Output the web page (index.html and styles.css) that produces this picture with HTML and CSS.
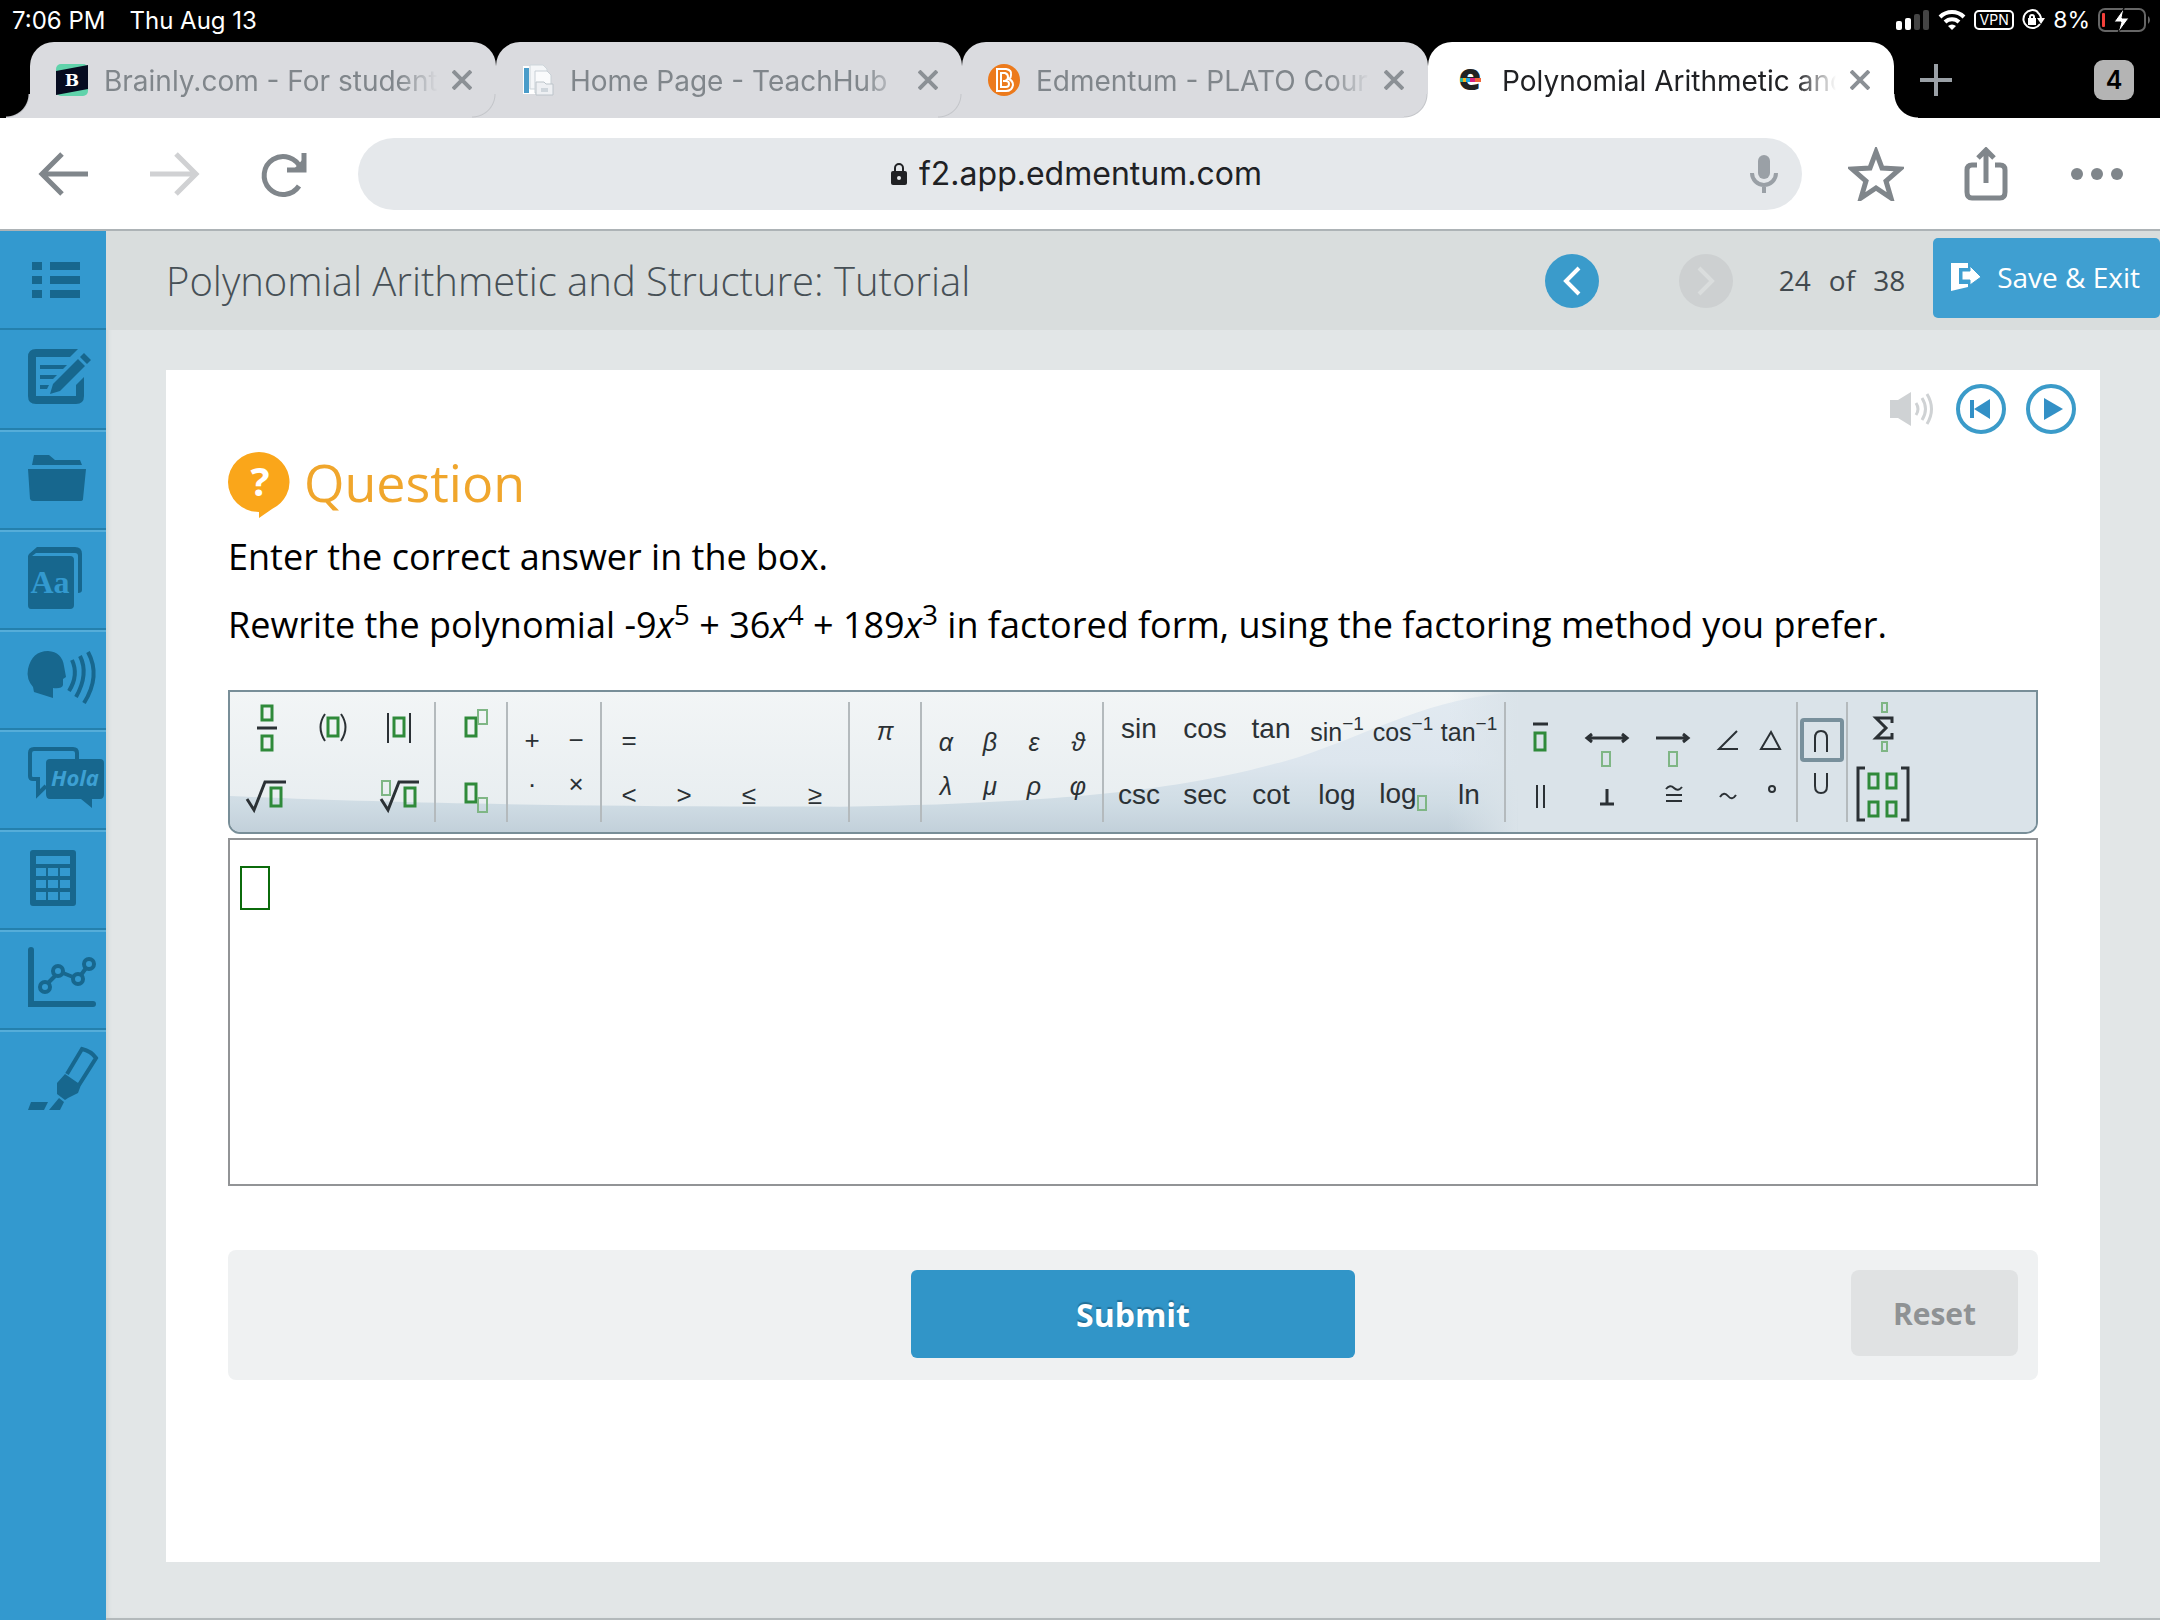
FILE: index.html
```html
<!DOCTYPE html>
<html lang="en">
<head>
  <meta charset="UTF-8">
  <meta name="viewport" content="width=device-width, initial-scale=1.0">
  <title>Polynomial Arithmetic and Structure: Tutorial</title>
  <link rel="stylesheet" href="styles.css">
</head>
<body>

  <!-- device status bar -->
  <div class="status-bar">
    <span>7:06 PM</span>
    <span>Thu Aug 13</span>
    <div class="status-right">
      <svg width="34" height="22" viewBox="0 0 34 22"><rect x="0" y="12" width="6" height="9" rx="2" fill="#fff"/><rect x="9" y="9" width="6" height="12" rx="2" fill="#fff"/><rect x="18" y="5" width="6" height="16" rx="2" fill="#444"/><rect x="27" y="1" width="6" height="20" rx="2" fill="#444"/></svg>
      <svg width="28" height="20" viewBox="0 0 28 20" fill="none" stroke="#fff" stroke-width="4"><path d="M2 7a17 17 0 0 1 24 0M7 12a10 10 0 0 1 14 0"/><path d="M14 20l-4-4a6 6 0 0 1 8 0z" fill="#fff" stroke="none"/></svg>
      <span class="vpn">VPN</span>
      <svg width="23" height="22" viewBox="0 0 23 22" fill="none" stroke="#fff" stroke-width="2"><path d="M16 3a9 9 0 1 0 2 12M15 3a9 9 0 0 1 4 7"/><path d="M15 9h8l-4 6z" fill="#fff" stroke="none"/><rect x="6" y="9" width="8" height="7" fill="#fff" stroke="none"/><path d="M8 10V8a2 2 0 0 1 4 0v2"/></svg>
      <span class="percent">8%</span>
      <svg width="54" height="26" viewBox="0 0 54 26"><rect x="1" y="2" width="46" height="22" rx="6" fill="none" stroke="#666" stroke-width="2"/><path d="M50 9a5 5 0 0 1 0 8z" fill="#666"/><rect x="4" y="6" width="3" height="14" rx="1" fill="#f3403a"/><path d="M26 1L16 15h7l-3 11 11-15h-7z" fill="#fff" stroke="#000" stroke-width="1"/></svg>
    </div>
  </div>

  <!-- browser tabs -->
  <div class="tab-bar">
    <div class="tab">
      <svg class="favicon" viewBox="0 0 32 32"><rect width="32" height="32" rx="5" fill="#60d3ab"/><path d="M0 7L32 1V25L0 31z" fill="#060b20"/><text x="16" y="22" text-anchor="middle" font-family="DejaVu Serif" font-weight="bold" font-size="17" fill="#fff">B</text></svg>
      <span class="tab-title">Brainly.com - For students</span>
      <button class="tab-close" aria-label="Close tab"><svg width="20" height="20" viewBox="0 0 20 20"><path d="M1 1l18 18M19 1L1 19"/></svg></button>
    </div>
    <div class="tab">
      <svg class="favicon" viewBox="0 0 32 32"><rect x="1" y="2" width="18" height="28" fill="#fff"/><rect x="2" y="4" width="5" height="25" fill="#4a9cc9"/><path d="M8 1h13l4 4v20H8z" fill="#f4f6f8" stroke="#cdd5da"/><path d="M13 7h12l4 4v18H13z" fill="#fafbfc" stroke="#c8d0d6"/><path d="M14 18h8l2 2h7v11H14z" fill="#eef0f3" stroke="#bcc4ca"/><rect x="19" y="24" width="7" height="4" fill="#cfd6dc"/></svg>
      <span class="tab-title">Home Page - TeachHub</span>
      <button class="tab-close" aria-label="Close tab"><svg width="20" height="20" viewBox="0 0 20 20"><path d="M1 1l18 18M19 1L1 19"/></svg></button>
    </div>
    <div class="tab">
      <svg class="favicon" viewBox="0 0 32 32"><circle cx="16" cy="16" r="16" fill="#ec7a1c"/><path d="M9 5h9q6 1 5 6q0 3-2 4q4 2 4 6q-1 6-7 6H9zM13 9v14h5q3 0 3-3t-3-3h-3h2q3-1 3-4t-3-4z" fill="none" stroke="#fff" stroke-width="2"/></svg>
      <span class="tab-title">Edmentum - PLATO Courseware</span>
      <button class="tab-close" aria-label="Close tab"><svg width="20" height="20" viewBox="0 0 20 20"><path d="M1 1l18 18M19 1L1 19"/></svg></button>
    </div>
    <div class="tab active">
      <svg class="favicon" viewBox="0 0 32 32"><text x="16" y="26" text-anchor="middle" font-family="Open Sans" font-weight="800" font-size="37" fill="#222">e</text><rect x="6" y="14" width="3" height="4" fill="#2db5a0"/><rect x="9" y="14" width="3" height="4" fill="#f7b51c"/><rect x="12" y="14" width="4" height="4" fill="#21a6dd"/><rect x="16" y="14" width="5" height="4" fill="#d6227f"/><rect x="21" y="14" width="6" height="4" fill="#f0663a"/></svg>
      <span class="tab-title">Polynomial Arithmetic and Structure</span>
      <button class="tab-close" aria-label="Close tab"><svg width="20" height="20" viewBox="0 0 20 20"><path d="M1 1l18 18M19 1L1 19"/></svg></button>
    </div>
    <button class="new-tab" aria-label="New tab"><svg width="32" height="32" viewBox="0 0 32 32"><path d="M16 0v32M0 16h32" stroke="#9aa0a6" stroke-width="4"/></svg></button>
    <button class="tab-count">4</button>
  </div>

  <!-- address row -->
  <div class="nav-bar">
    <button class="nav-btn" aria-label="Back"><svg width="52" height="48" viewBox="0 0 52 48" stroke="#80868b"><path d="M24 4L4 24l20 20M4 24h46"/></svg></button>
    <button class="nav-btn forward" aria-label="Forward"><svg width="52" height="48" viewBox="0 0 52 48" stroke="#d0d1d3"><path d="M28 4l20 20-20 20M48 24H2"/></svg></button>
    <button class="nav-btn reload" aria-label="Reload"><svg width="48" height="48" viewBox="0 0 48 48" stroke="#80868b"><path d="M39 36A19 19 0 1 1 41 19"/><path d="M44 3v17H27" stroke-width="5"/><path d="M44 20L33 20 44 8z" fill="#80868b" stroke="none"/></svg></button>
    <div class="omnibox">
      <svg width="16" height="22" viewBox="0 0 16 22"><rect y="8" width="16" height="14" rx="2" fill="#202124"/><path d="M4 9V5a4 4 0 0 1 8 0v4" fill="none" stroke="#202124" stroke-width="2"/><circle cx="8" cy="15" r="2" fill="#e5e8eb"/></svg>
      <input class="url" type="text" aria-label="Address" value="f2.app.edmentum.com">
      <button class="mic" aria-label="Voice search"><svg width="28" height="40" viewBox="0 0 28 40"><rect x="8" y="1" width="12" height="24" rx="6" fill="#9aa0a6"/><path d="M2 19a12 12 0 0 0 24 0M14 31v8" fill="none" stroke="#9aa0a6" stroke-width="4"/></svg></button>
    </div>
    <button class="nav-btn star" aria-label="Bookmark"><svg width="56" height="54" viewBox="0 0 56 54" stroke="#80868b"><path d="M28 5l6 16 18 1-14 12 5 17-15-10-15 10 5-17L4 22l18-1z"/></svg></button>
    <button class="nav-btn share" aria-label="Share"><svg width="44" height="54" viewBox="0 0 44 54" stroke="#80868b"><path d="M13 18H8q-5 0-5 5v22q0 6 5 6h28q5 0 5-6V23q0-5-5-5h-5M22 36V4M14 11l8-8 8 8"/></svg></button>
    <button class="nav-btn more" aria-label="More"><svg width="54" height="14" viewBox="0 0 54 14" fill="#80868b"><circle cx="7" cy="7" r="6"/><circle cx="27" cy="7" r="6"/><circle cx="47" cy="7" r="6"/></svg></button>
  </div>

  <div class="app">
    <nav class="sidebar">
      <button aria-label="Contents"><svg viewBox="0 0 106 100"><path d="M32 31h10v8H32zM50 31h30v8H50zM32 45h10v8H32zM50 45h30v8H50zM32 59h10v8H32zM50 59h30v8H50z"/></svg></button>
      <button aria-label="Notes"><svg viewBox="0 0 106 100"><path d="M78 19H36q-8 0-8 8v39q0 8 8 8h40q8 0 8-8V47l-8 8v11H36V27h34z"/><path d="M40 35h27l-4 4H40zM40 45h17l-4 4H40zM40 55h9l-2 4h-7z"/><path d="M50 64l3-10 25-25 7 7-25 25zM80 27l4-4 7 7-4 4z"/></svg></button>
      <button aria-label="Portfolio"><svg viewBox="0 0 106 100"><path d="M34 25h15l6 5h25l2 5H32zM28 39h58l-3 30q0 2-3 2H33q-2 0-3-2z"/></svg></button>
      <button aria-label="Dictionary"><svg viewBox="0 0 106 100"><path d="M29 24l8-7h38q7 0 7 7v36q0 3-4 3V26q0-3-3-3H36l-4 3h38q4 0 4 4v45q0 4-4 4H31q-3 0-3-4V26z"/><text class="book-text" x="50" y="63" text-anchor="middle">Aa</text></svg></button>
      <button aria-label="Read aloud"><svg viewBox="0 0 106 100"><path d="M33 57q-7-8-5-18 4-18 20-18 14 1 16 15l2 11-3 2v6q-1 4-10 3v10l-19-6z"/><path d="M72 30q7 15-3 31M80 26q9 18-4 41M88 22q13 24-4 51" fill="none" stroke="#17678e" stroke-width="4"/></svg></button>
      <button aria-label="Translate"><svg viewBox="0 0 106 100"><path d="M46 56l-8 8V49h-5q-3 0-3-3V23q0-4 4-4h39q4 0 4 4v8" fill="none" stroke="#17678e" stroke-width="4"/><path d="M50 29h50q4 0 4 4v31q0 5-4 5h-8v9l-11-9H50q-4 0-4-5V33q0-4 4-4z"/><text class="hola-text" x="75" y="56" text-anchor="middle">Hola</text></svg></button>
      <button aria-label="Calculator"><svg viewBox="0 0 106 100"><path fill-rule="evenodd" d="M33 20h40q3 0 3 3v50q0 3-3 3H33q-3 0-3-3V23q0-3 3-3zM36 26v8h34v-8zM36 38v8h10v-8zM48 38v8h10v-8zM60 38v8h10v-8zM36 50v8h10v-8zM48 50v8h10v-8zM60 50v8h10v-8zM36 62v8h10v-8zM48 62v8h10v-8zM60 62v8h10v-8z"/></svg></button>
      <button aria-label="Graph"><svg viewBox="0 0 106 100"><g fill="none" stroke="#17678e" stroke-width="4"><path d="M31 20v54h62" stroke-width="6" stroke-linecap="round"/><circle cx="45" cy="57" r="5"/><circle cx="58" cy="41" r="5"/><circle cx="78" cy="49" r="5"/><circle cx="89" cy="34" r="5"/><path d="M49 52l6-6M63 43l10 4M81 45l5-7"/></g></svg></button>
      <button aria-label="Highlighter"><svg viewBox="0 0 106 100"><path d="M67 44l15-25q9 2 14 9L79 55" fill="none" stroke="#17678e" stroke-width="4"/><path d="M65 44l16 11-3 8-10 5-3 2-8-6v-11zM59 68l5 4-4 8H49zM31 72h17l-4 8H28z"/></svg></button>
    </nav>

    <div class="content">
      <header class="lesson-header">
        <h1>Polynomial Arithmetic and Structure: Tutorial</h1>
        <button class="page-btn" aria-label="Previous page"><svg width="20" height="32" viewBox="0 0 20 32"><path d="M17 3L4 16l13 13"/></svg></button>
        <button class="page-btn next" aria-label="Next page" disabled><svg width="20" height="32" viewBox="0 0 20 32"><path d="M3 3l13 13L3 29"/></svg></button>
        <span class="page-count"><span>24</span><span>of</span><span>38</span></span>
        <button class="save-btn"><svg width="30" height="30" viewBox="0 0 30 30"><path d="M0 1h17v5h-9v16h9v3L0 29z" fill="#fff"/><path d="M11 9h8V4l11 11-11 8v-5h-8z" fill="#fff" stroke="#3f9fd1" stroke-width="1"/></svg>Save &amp; Exit</button>
      </header>

      <main class="paper">
        <div class="audio">
          <svg width="44" height="36" viewBox="0 0 44 36"><path d="M0 9h8L21 1v34L8 27H0z" fill="#cfd2d4"/><path d="M26 12q4 6 0 12M32 7q7 11 0 22M37 3q9 15 0 30" fill="none" stroke="#cfd2d4" stroke-width="3"/></svg>
          <button class="audio-btn restart" aria-label="Restart audio"><svg width="50" height="50" viewBox="0 0 50 50"><circle cx="25" cy="25" r="23" fill="none" stroke="#3b9bc9" stroke-width="4"/><path d="M14 16h4v18h-4zM34 15v20L18 25z" fill="#3390c6"/></svg></button>
          <button class="audio-btn" aria-label="Play audio"><svg width="50" height="50" viewBox="0 0 50 50"><circle cx="25" cy="25" r="23" fill="none" stroke="#3b9bc9" stroke-width="4"/><path d="M18 14v22l19-11z" fill="#3390c6"/></svg></button>
        </div>

        <div class="question">
          <h2>
            <svg width="62" height="66" viewBox="0 0 62 66"><path d="M31 0a31 30 0 0 1 13 57L31 66V60A31 30 0 0 1 31 0z" fill="#faa61a"/><text x="32" y="44" text-anchor="middle">?</text></svg>
            Question
          </h2>
          <p>Enter the correct answer in the box.</p>
          <p>Rewrite the polynomial -9<i>x</i><sup>5</sup> + 36<i>x</i><sup>4</sup> + 189<i>x</i><sup>3</sup> in factored form, using the factoring method you prefer.</p>

          <div class="math-bar">
            <svg class="math-bg" viewBox="0 0 1809 144" preserveAspectRatio="none">
              <defs>
                <linearGradient id="hill" x1="0" y1="0" x2="0" y2="1"><stop offset="0" stop-color="#e2eaf1"/><stop offset="0.5" stop-color="#dde6ee"/><stop offset="0.8" stop-color="#cfdce4"/><stop offset="1" stop-color="#c2d0da"/></linearGradient>
                <linearGradient id="side" x1="0" y1="0" x2="1" y2="0"><stop offset="0" stop-color="#dae3e9" stop-opacity="0"/><stop offset="1" stop-color="#dae3e9"/></linearGradient>
              </defs>
              <path d="M0 107C150 114 350 118 611 118C900 114 1000 88 1070 67C1150 40 1200 6 1290 0H1809V144H0z" fill="url(#hill)"/>
              <rect x="1220" y="0" width="70" height="144" fill="url(#side)"/>
              <rect x="1290" y="0" width="519" height="144" fill="#dae3e9"/>
            </svg>

            <div class="group cols-3 rows-tall">
              <button aria-label="Fraction"><svg viewBox="0 0 66 66"><path class="slot" d="M28 10h10v14H28zM28 40h10v14H28z"/><path class="ink bold" d="M23 32h20"/></svg></button>
              <button aria-label="Parentheses"><svg viewBox="0 0 66 66"><path class="slot" d="M28 22h10v18H28z"/><path class="ink" d="M25 18q-9 13 0 27M41 18q9 13 0 27"/></svg></button>
              <button aria-label="Absolute value"><svg viewBox="0 0 66 66"><path class="slot" d="M28 22h10v18H28z"/><path class="ink" d="M22 17v30M44 17v30"/></svg></button>
              <button aria-label="Square root"><svg viewBox="0 0 66 66"><path class="slot" d="M37 26h10v18H37z"/><path class="ink bold" d="M13 37l7 11 11-28h21"/></svg></button>
              <span></span>
              <button aria-label="Nth root"><svg viewBox="0 0 66 66"><path class="slot" d="M39 26h10v18H39z"/><path class="slot light" d="M16 19h8v14h-8z"/><path class="ink bold" d="M15 37l7 11 11-28h20"/></svg></button>
            </div>
            <span class="sep"></span>
            <div class="group cols-1 rows-tall">
              <button aria-label="Superscript"><svg viewBox="0 0 66 66"><path class="slot" d="M28 22h10v18H28z"/><path class="slot light" d="M40 14h9v14h-9z"/></svg></button>
              <button aria-label="Subscript"><svg viewBox="0 0 66 66"><path class="slot" d="M28 22h10v18H28z"/><path class="slot light" d="M40 36h9v14h-9z"/></svg></button>
            </div>
            <span class="sep"></span>
            <div class="group cols-small-2 rows-short">
              <button>+</button><button>−</button>
              <button>·</button><button>×</button>
            </div>
            <span class="sep"></span>
            <div class="group cols-relations">
              <button>=</button><span></span><span></span><span></span>
              <button>&lt;</button><button>&gt;</button><button>≤</button><button>≥</button>
            </div>
            <span class="sep"></span>
            <div class="group cols-1 rows-tall greek">
              <button>π</button>
            </div>
            <span class="sep"></span>
            <div class="group cols-small-4 rows-short greek">
              <button>α</button><button>β</button><button>ε</button><button>ϑ</button>
              <button>λ</button><button>μ</button><button>ρ</button><button>φ</button>
            </div>
            <span class="sep"></span>
            <div class="group cols-6 rows-tall functions">
              <button>sin</button><button>cos</button><button>tan</button>
              <button class="inverse">sin<sup>−1</sup></button><button class="inverse">cos<sup>−1</sup></button><button class="inverse">tan<sup>−1</sup></button>
              <button>csc</button><button>sec</button><button>cot</button>
              <button>log</button><button>log<span class="base"></span></button><button>ln</button>
            </div>
            <span class="sep"></span>
            <div class="group cols-geometry rows-tall">
              <button aria-label="Segment"><svg viewBox="0 0 66 66"><path class="ink bold" d="M25 28h15"/><path class="slot" d="M27 37h10v17H27z"/></svg></button>
              <button aria-label="Line"><svg viewBox="0 0 66 66"><path class="ink bold" d="M13 42h40M18 38l-5 4 5 4M48 38l5 4-5 4"/><path class="slot light" d="M28 56h8v14h-8z"/></svg></button>
              <button aria-label="Ray"><svg viewBox="0 0 66 66"><path class="ink bold" d="M16 42h32M43 38l5 4-5 4"/><path class="slot light" d="M29 56h8v14h-8z"/></svg></button>
              <button aria-label="Angle"><svg viewBox="0 0 44 66"><path class="ink" d="M31 35L13 53h19"/></svg></button>
              <button aria-label="Triangle"><svg viewBox="0 0 44 66"><path class="ink" d="M21 36l9 17H11z"/></svg></button>
              <button aria-label="Parallel"><svg viewBox="0 0 66 66"><path class="ink" d="M29 23v23M36 23v23"/></svg></button>
              <button aria-label="Perpendicular"><svg viewBox="0 0 66 66"><path class="ink bold" d="M33 27v15M26 42h14"/></svg></button>
              <button aria-label="Congruent"><svg viewBox="0 0 66 66"><path class="ink" d="M26 27q4-5 8-1t8-1M26 33h16M26 39h16"/></svg></button>
              <button aria-label="Similar"><svg viewBox="0 0 44 66"><path class="ink" d="M14 35q4-6 8-1t8-1"/></svg></button>
              <button aria-label="Degree"><svg viewBox="0 0 44 66"><circle class="ink" cx="22" cy="27" r="3"/></svg></button>
            </div>
            <span class="sep"></span>
            <div class="group cols-small-1 rows-short">
              <button class="selected" aria-label="Intersection"><svg viewBox="0 0 44 44"><path class="ink" d="M15 34V20q0-7 6-7t6 7v14"/></svg></button>
              <button aria-label="Union"><svg viewBox="0 0 44 44"><path class="ink" d="M15 11v13q0 7 6 7t6-7V11"/></svg></button>
            </div>
            <span class="sep"></span>
            <div class="group cols-1 rows-tall">
              <button aria-label="Sum"><svg viewBox="0 0 66 66"><path class="slot light" d="M32 7h5v9h-5zM32 46h5v9h-5z"/><path class="ink bold" d="M42 27v-5H26l10 10-10 10h16v-5"/></svg></button>
              <button aria-label="Matrix"><svg viewBox="0 0 66 66"><path class="slot" d="M19 12h9v14h-9zM37 12h9v14h-9zM19 40h9v14h-9zM37 40h9v14h-9z"/><path class="ink bold" d="M15 6H8v52h7M51 6h7v52h-7"/></svg></button>
            </div>
          </div>

          <div class="answer">
            <textarea aria-label="Answer"></textarea>
            <span class="answer-slot"></span>
          </div>

          <div class="actions">
            <button class="submit-btn">Submit</button>
            <button class="reset-btn">Reset</button>
          </div>
        </div>
      </main>
    </div>
  </div>

</body>
</html>
```
FILE: styles.css
```css
* {
  box-sizing: border-box;
}

body {
  margin: 0;
  min-height: 100vh;
  display: flex;
  flex-direction: column;
  font-family: "Open Sans", sans-serif;
  background-color: #e2e6e7;
}

button {
  margin: 0;
  padding: 0;
  border: none;
  background: none;
  font: inherit;
  color: inherit;
  cursor: pointer;
}

svg {
  display: block;
  flex-shrink: 0;
}

/* status bar */
.status-bar {
  display: flex;
  align-items: center;
  gap: 24px;
  height: 42px;
  padding: 0 8px 2px 12px;
  background-color: #000;
  color: #fff;
  font-family: Inter, sans-serif;
  font-size: 24px;
}

.status-right {
  display: flex;
  align-items: center;
  gap: 8px;
  margin-left: auto;
}

.vpn {
  width: 40px;
  height: 20px;
  border: 2px solid #fff;
  border-radius: 5px;
  font-size: 14px;
  line-height: 16px;
  text-align: center;
}

.percent {
  font-size: 23px;
}

/* tabs */
.tab-bar {
  display: flex;
  align-items: center;
  height: 76px;
  padding: 0 26px 0 30px;
  background-color: #000;
  font-family: Inter, sans-serif;
}

.tab {
  --tab-color: #dadbdf;
  position: relative;
  display: flex;
  align-items: center;
  flex: 0 1 466px;
  min-width: 0;
  height: 76px;
  padding: 0 24px 0 26px;
  border-radius: 24px 24px 0 0;
  background-color: var(--tab-color);
  color: #80868b;
}

.tab.active {
  --tab-color: #fff;
  color: #202124;
}

.tab::before,
.tab.active::after {
  content: "";
  position: absolute;
  bottom: 0;
  width: 24px;
  height: 24px;
}

.tab::before {
  right: 100%;
  background: radial-gradient(circle at 0 0, transparent 22px, #c3c5c9 23px, var(--tab-color) 24px);
}

.tab.active::after {
  left: 100%;
  background: radial-gradient(circle at 100% 0, transparent 23px, #fff 24px);
}

.favicon {
  width: 32px;
  height: 32px;
}

.tab-title {
  flex: 1;
  min-width: 0;
  margin: 0 14px 0 16px;
  padding-top: 2px;
  font-size: 28px;
  line-height: 40px;
  white-space: nowrap;
  overflow: hidden;
  -webkit-mask-image: linear-gradient(to right, #000 88%, transparent);
  mask-image: linear-gradient(to right, #000 88%, transparent);
}

.tab-close svg {
  fill: none;
  stroke: #8b9095;
  stroke-width: 4;
}

.new-tab {
  margin-left: 26px;
}

.tab-count {
  width: 40px;
  height: 40px;
  margin-left: auto;
  border-radius: 9px;
  background-color: #b4b4b4;
  color: #000;
  font-size: 25px;
  font-weight: 600;
}

/* address row */
.nav-bar {
  display: flex;
  align-items: center;
  height: 113px;
  padding: 0 36px 0 38px;
  background-color: #fff;
  border-bottom: 2px solid #adb3b6;
}

.nav-btn svg {
  fill: none;
  stroke-width: 5;
}

.forward {
  margin-left: 58px;
}

.reload {
  margin-left: 60px;
}

.omnibox {
  position: relative;
  display: flex;
  flex: 1;
  align-items: center;
  justify-content: center;
  gap: 12px;
  height: 72px;
  margin: 0 46px 0 50px;
  border-radius: 36px;
  background-color: #e5e8eb;
}

.url {
  width: 350px;
  padding: 0;
  border: none;
  background: none;
  color: #202124;
  font-family: Inter, sans-serif;
  font-size: 32px;
  line-height: 44px;
}

.mic {
  position: absolute;
  right: 24px;
}

.share {
  margin-left: 60px;
}

.more {
  margin-left: 62px;
}

.more svg {
  fill: #80868b;
}

/* application */
.app {
  display: flex;
  flex: 1;
}

.sidebar {
  width: 106px;
  flex-shrink: 0;
  background-color: #3399cf;
}

.sidebar button {
  display: block;
  width: 100%;
  height: 100px;
  border-top: 2px solid #55add9;
  border-bottom: 2px solid #2480ad;
}

.sidebar button:first-child {
  height: 99px;
}

.sidebar button:first-child,
.sidebar button:nth-child(2) {
  border-top-color: transparent;
}

.sidebar button:last-child {
  border-bottom: none;
}

.sidebar svg {
  width: 106px;
  height: 100px;
  margin-top: -2px;
  fill: #17678e;
}

.sidebar .book-text {
  font-family: "Liberation Serif", serif;
  font-size: 32px;
  font-weight: bold;
  fill: #3399cf;
}

.sidebar .hola-text {
  font-family: "Open Sans", sans-serif;
  font-size: 22px;
  font-style: italic;
  font-weight: bold;
  fill: #3da0d3;
}

.content {
  display: flex;
  flex: 1;
  flex-direction: column;
  min-width: 0;
  border-bottom: 2px solid #b3b9bb;
  box-shadow: inset 4px 0 4px -2px #cdd6d7;
}

.lesson-header {
  display: flex;
  align-items: center;
  height: 99px;
  padding-left: 60px;
  background-color: #d9dddd;
  color: #475056;
}

.lesson-header h1 {
  flex: 1;
  margin: 0;
  font-size: 40px;
  font-weight: 300;
  line-height: 56px;
}

.page-btn {
  display: flex;
  align-items: center;
  justify-content: center;
  width: 54px;
  height: 54px;
  border-radius: 50%;
  background-color: #3a9bcb;
}

.page-btn svg {
  fill: none;
  stroke: #fff;
  stroke-width: 4;
}

.page-btn.next {
  margin-left: 80px;
  background-color: #cdd0d1;
}

.page-btn.next svg {
  stroke: #dadddd;
}

.page-count {
  display: flex;
  gap: 18px;
  margin: 0 28px 2px 46px;
  font-size: 28px;
  color: #42494e;
}

.save-btn {
  display: flex;
  align-items: center;
  gap: 16px;
  height: 80px;
  margin-bottom: 6px;
  padding: 0 20px 2px 18px;
  border-radius: 5px;
  background-color: #3f9fd1;
  color: #fff;
  font-size: 28px;
}

.paper {
  flex: 1;
  margin: 40px 60px 56px;
  padding: 14px 24px 0 62px;
  background-color: #fff;
}

.audio {
  display: flex;
  align-items: center;
  justify-content: flex-end;
}

.restart {
  margin: 0 20px 0 22px;
}

.question {
  margin-right: 38px;
}

.question h2 {
  display: flex;
  align-items: flex-start;
  gap: 14px;
  margin: 18px 0 14px;
  color: #f0a62c;
  font-size: 52px;
  font-weight: 400;
  line-height: 60px;
}

.question h2 text {
  font-family: "Open Sans", sans-serif;
  font-size: 40px;
  font-weight: bold;
  fill: #fff;
}

.question p {
  margin: 0 0 18px;
  font-size: 36px;
  line-height: 50px;
}

.question p sup {
  font-size: 28px;
  line-height: 0;
  vertical-align: 13px;
}

/* math input */
.math-bar {
  position: relative;
  display: flex;
  align-items: center;
  height: 144px;
  margin-top: 40px;
  padding-left: 2px;
  border: 2px solid #788e98;
  border-radius: 0 0 12px 12px;
  background: linear-gradient(#f2f5f6, #e6ecef);
  color: #2b3135;
  font-family: "Liberation Sans", sans-serif;
  overflow: hidden;
}

.math-bg {
  position: absolute;
  top: 0;
  left: 0;
  width: 100%;
  height: 100%;
}

.sep {
  position: relative;
  width: 2px;
  height: 120px;
  background-color: #b4babd;
}

.group {
  position: relative;
  display: grid;
  align-content: start;
  height: 132px;
  padding: 0 2px;
}

.rows-tall {
  grid-auto-rows: 66px;
}

.rows-short {
  grid-auto-rows: 44px;
  height: 88px;
}

.cols-1 {
  grid-template-columns: 66px;
}

.cols-3 {
  grid-template-columns: repeat(3, 66px);
}

.cols-6 {
  grid-template-columns: repeat(6, 66px);
}

.cols-small-1 {
  grid-template-columns: 44px;
}

.cols-small-2 {
  grid-template-columns: repeat(2, 44px);
}

.cols-small-4 {
  grid-template-columns: repeat(4, 44px);
}

.cols-geometry {
  grid-template-columns: repeat(3, 66px) repeat(2, 44px);
}

.cols-relations {
  grid-template-columns: 50px 60px 70px 62px;
  grid-template-rows: 44px 66px;
  height: 88px;
}

.group button {
  min-width: 0;
  font-size: 26px;
  line-height: 30px;
  white-space: nowrap;
}

.group button svg {
  width: 100%;
  overflow: visible;
}

.greek button {
  padding-top: 4px;
  font-size: 25px;
  font-style: italic;
}

.functions button {
  font-size: 28px;
}

.functions .inverse {
  padding-top: 6px;
  font-size: 25px;
}

.functions sup {
  font-size: 19px;
  line-height: 0;
  vertical-align: 11px;
}

.base {
  display: inline-block;
  width: 10px;
  height: 16px;
  border: 2px solid #7fb685;
  vertical-align: -8px;
}

.slot {
  fill: none;
  stroke: #2f8a3a;
  stroke-width: 3;
}

.slot.light {
  stroke: #7fb685;
  stroke-width: 2;
}

.ink {
  fill: none;
  stroke: #2b3135;
  stroke-width: 2;
}

.ink.bold {
  stroke-width: 3;
}

.group .selected {
  border-radius: 4px;
  box-shadow: inset 0 0 0 4px #78909c;
}

.answer {
  position: relative;
  margin-top: 4px;
}

.answer textarea {
  display: block;
  width: 100%;
  height: 348px;
  border: 2px solid #929496;
  resize: none;
}

.answer-slot {
  position: absolute;
  top: 28px;
  left: 12px;
  width: 30px;
  height: 44px;
  border: 2px solid #0b6b0b;
}

/* buttons under the answer */
.actions {
  display: grid;
  grid-template-columns: 1fr 444px 1fr;
  align-items: start;
  height: 130px;
  margin-top: 64px;
  padding: 20px;
  border-radius: 8px;
  background-color: #eff1f2;
  font-size: 32px;
  font-weight: 600;
}

.submit-btn {
  grid-column: 2;
  height: 88px;
  border-radius: 6px;
  background-color: #3195c8;
  color: #fff;
  font-weight: 700;
  text-shadow: 0 -2px 1px #236f96;
}

.reset-btn {
  justify-self: end;
  width: 167px;
  height: 86px;
  border-radius: 8px;
  background-color: #e0e2e3;
  color: #8f9294;
  font-size: 30px;
  font-weight: 700;
}
```
